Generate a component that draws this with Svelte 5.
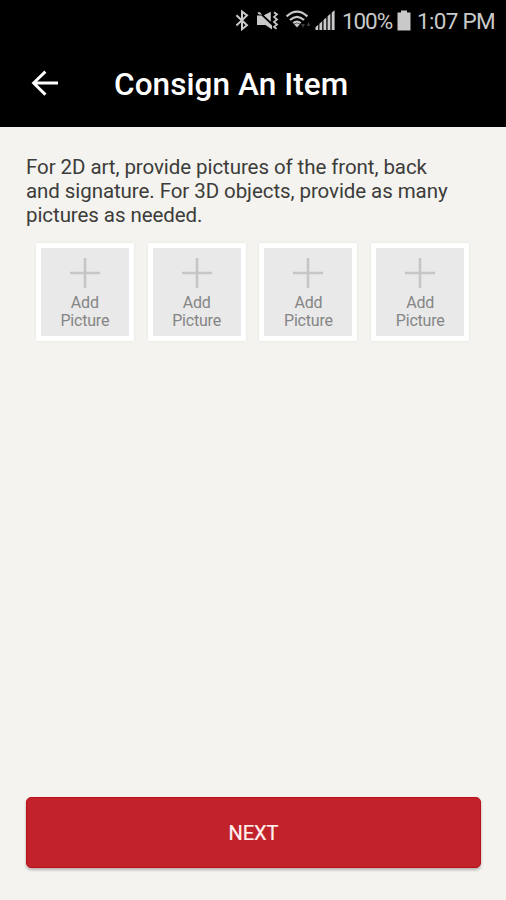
<script>
  const slots = [1, 2, 3, 4];
</script>

<div class="screen">
  <header>
    <div class="status">
      <svg class="icons" width="104" height="26" viewBox="232 8 104 26" aria-hidden="true">
        <g fill="none" stroke="#c9c9c9" stroke-width="2">
          <path d="M236.4 15.2 247 25.2 242 29.2V11.6L247 15.4 236.4 25.4" />
          <path d="M274 12.2l3 2.2-3 2.5 3 2.5-3 2.5 3 2.5-3 2.5 2.6 2" stroke-width="1.8" />
          <path d="M286.6 16.4Q297 6.8 307.4 16.4M290 20Q297 13.6 304 20M293.3 23.2Q297 20 300.7 23.2" stroke-width="2.2" />
        </g>
        <g fill="#c9c9c9">
          <path d="M257 15.6H261.5L272 25.5V29.6L265.5 25H257Z" />
          <path d="M263.8 15.2 270.8 11.8V21.8ZM257.4 12.2H259.8L262.2 14.6H258.8Z" />
          <path d="M294.2 24.2Q297 22.3 299.8 24.2L297 27.6Z" />
          <path d="M315.5 30v-2.8l2.7-2.4V30ZM319.4 30v-6.3l2.8-2.4V30ZM323.5 30V20l2.8-2.5V30ZM327.6 30V16.2l2.8-2.5V30ZM331.7 30V12.6l2.9-2.4V30Z" />
        </g>
        <path d="M301 24h4l-2 4zM306.5 26l2-4 2 4z" fill="#3b3b3b" />
      </svg>
      <span class="percent">100%</span>
      <svg class="battery" width="14" height="22" viewBox="0 0 14 22" aria-hidden="true">
        <path d="M4 .5H10V2.5H13.5V20.5H.5V2.5H4Z" fill="#c9c9c9" />
      </svg>
      <span class="time">1:07 PM</span>
    </div>
    <div class="bar">
      <svg width="28" height="28" viewBox="31 69 28 28" aria-hidden="true">
        <path d="M58 82H33.6M45.4 70.6 33.6 82 45.4 93.6" fill="none" stroke="#fff" stroke-width="2.9" />
      </svg>
      <h1>Consign An Item</h1>
    </div>
  </header>

  <main>
    <p>For 2D art, provide pictures of the front, back<br />and signature. For 3D objects, provide as many<br />pictures as needed.</p>
    <div class="slots">
      {#each slots as slot (slot)}
        <button class="slot">
          <svg width="32" height="32" viewBox="0 0 32 32" aria-hidden="true">
            <path d="M16 1V31M1 16H31" stroke="#c6c6c6" stroke-width="2.6" />
          </svg>
          <span>Add<br />Picture</span>
        </button>
      {/each}
    </div>
  </main>

  <button class="next">NEXT</button>
</div>

<style>
  :global(body) { margin: 0; }
  .screen {
    box-sizing: border-box;
    width: 506px;
    height: 900px;
    display: flex;
    flex-direction: column;
    background: #f4f3ef;
    font-family: Roboto, sans-serif;
    overflow: hidden;
  }
  header { height: 127px; background: #000; flex: none; }
  .status {
    height: 42px;
    box-sizing: border-box;
    display: flex;
    align-items: center;
    padding-left: 232px;
    color: #c9c9c9;
    font-size: 22.5px;
    white-space: nowrap;
  }
  .status svg { flex: none; }
  .percent { width: 62px; margin-left: 6px; letter-spacing: -1.1px; }
  .battery { margin-left: -7px; }
  .time { margin-left: 6px; letter-spacing: -0.7px; }
  .bar { height: 84px; display: flex; align-items: center; padding-left: 31px; }
  .bar svg { flex: none; }
  h1 {
    margin: 2px 0 0 55px;
    color: #fff;
    font-size: 31.5px;
    font-weight: 500;
    line-height: 40px;
    letter-spacing: 0.08px;
    white-space: nowrap;
  }
  main { flex: 1; padding: 28px 26px 0; }
  p {
    margin: 0;
    color: #3c3c3a;
    font-size: 20.5px;
    line-height: 24px;
    letter-spacing: -0.075px;
    white-space: nowrap;
  }
  .slots { display: flex; gap: 13.8px; padding: 16px 0 0 9.8px; }
  button { font-family: inherit; border: 0; margin: 0; padding: 0; }
  .slot {
    box-sizing: border-box;
    flex: none;
    width: 98px;
    height: 98px;
    padding-top: 9px;
    border: 5px solid #fff;
    background: #e9e9e9;
    box-shadow: 0 0 2px #e2e1dd;
    display: flex;
    flex-direction: column;
    align-items: center;
    color: #858585;
    font-size: 16px;
    line-height: 18px;
    letter-spacing: -0.2px;
  }
  .slot span { margin-top: 5px; }
  .next {
    box-sizing: border-box;
    flex: none;
    height: 71px;
    margin: 0 25px 32px 26px;
    border: 1.5px solid #b9101b;
    border-radius: 5px;
    background: #c2232b;
    color: #fff1f0;
    font-size: 20px;
    -webkit-text-stroke: 0.2px #fff1f0;
    box-shadow: 0 2px 3px #b5b4b0;
  }
</style>
